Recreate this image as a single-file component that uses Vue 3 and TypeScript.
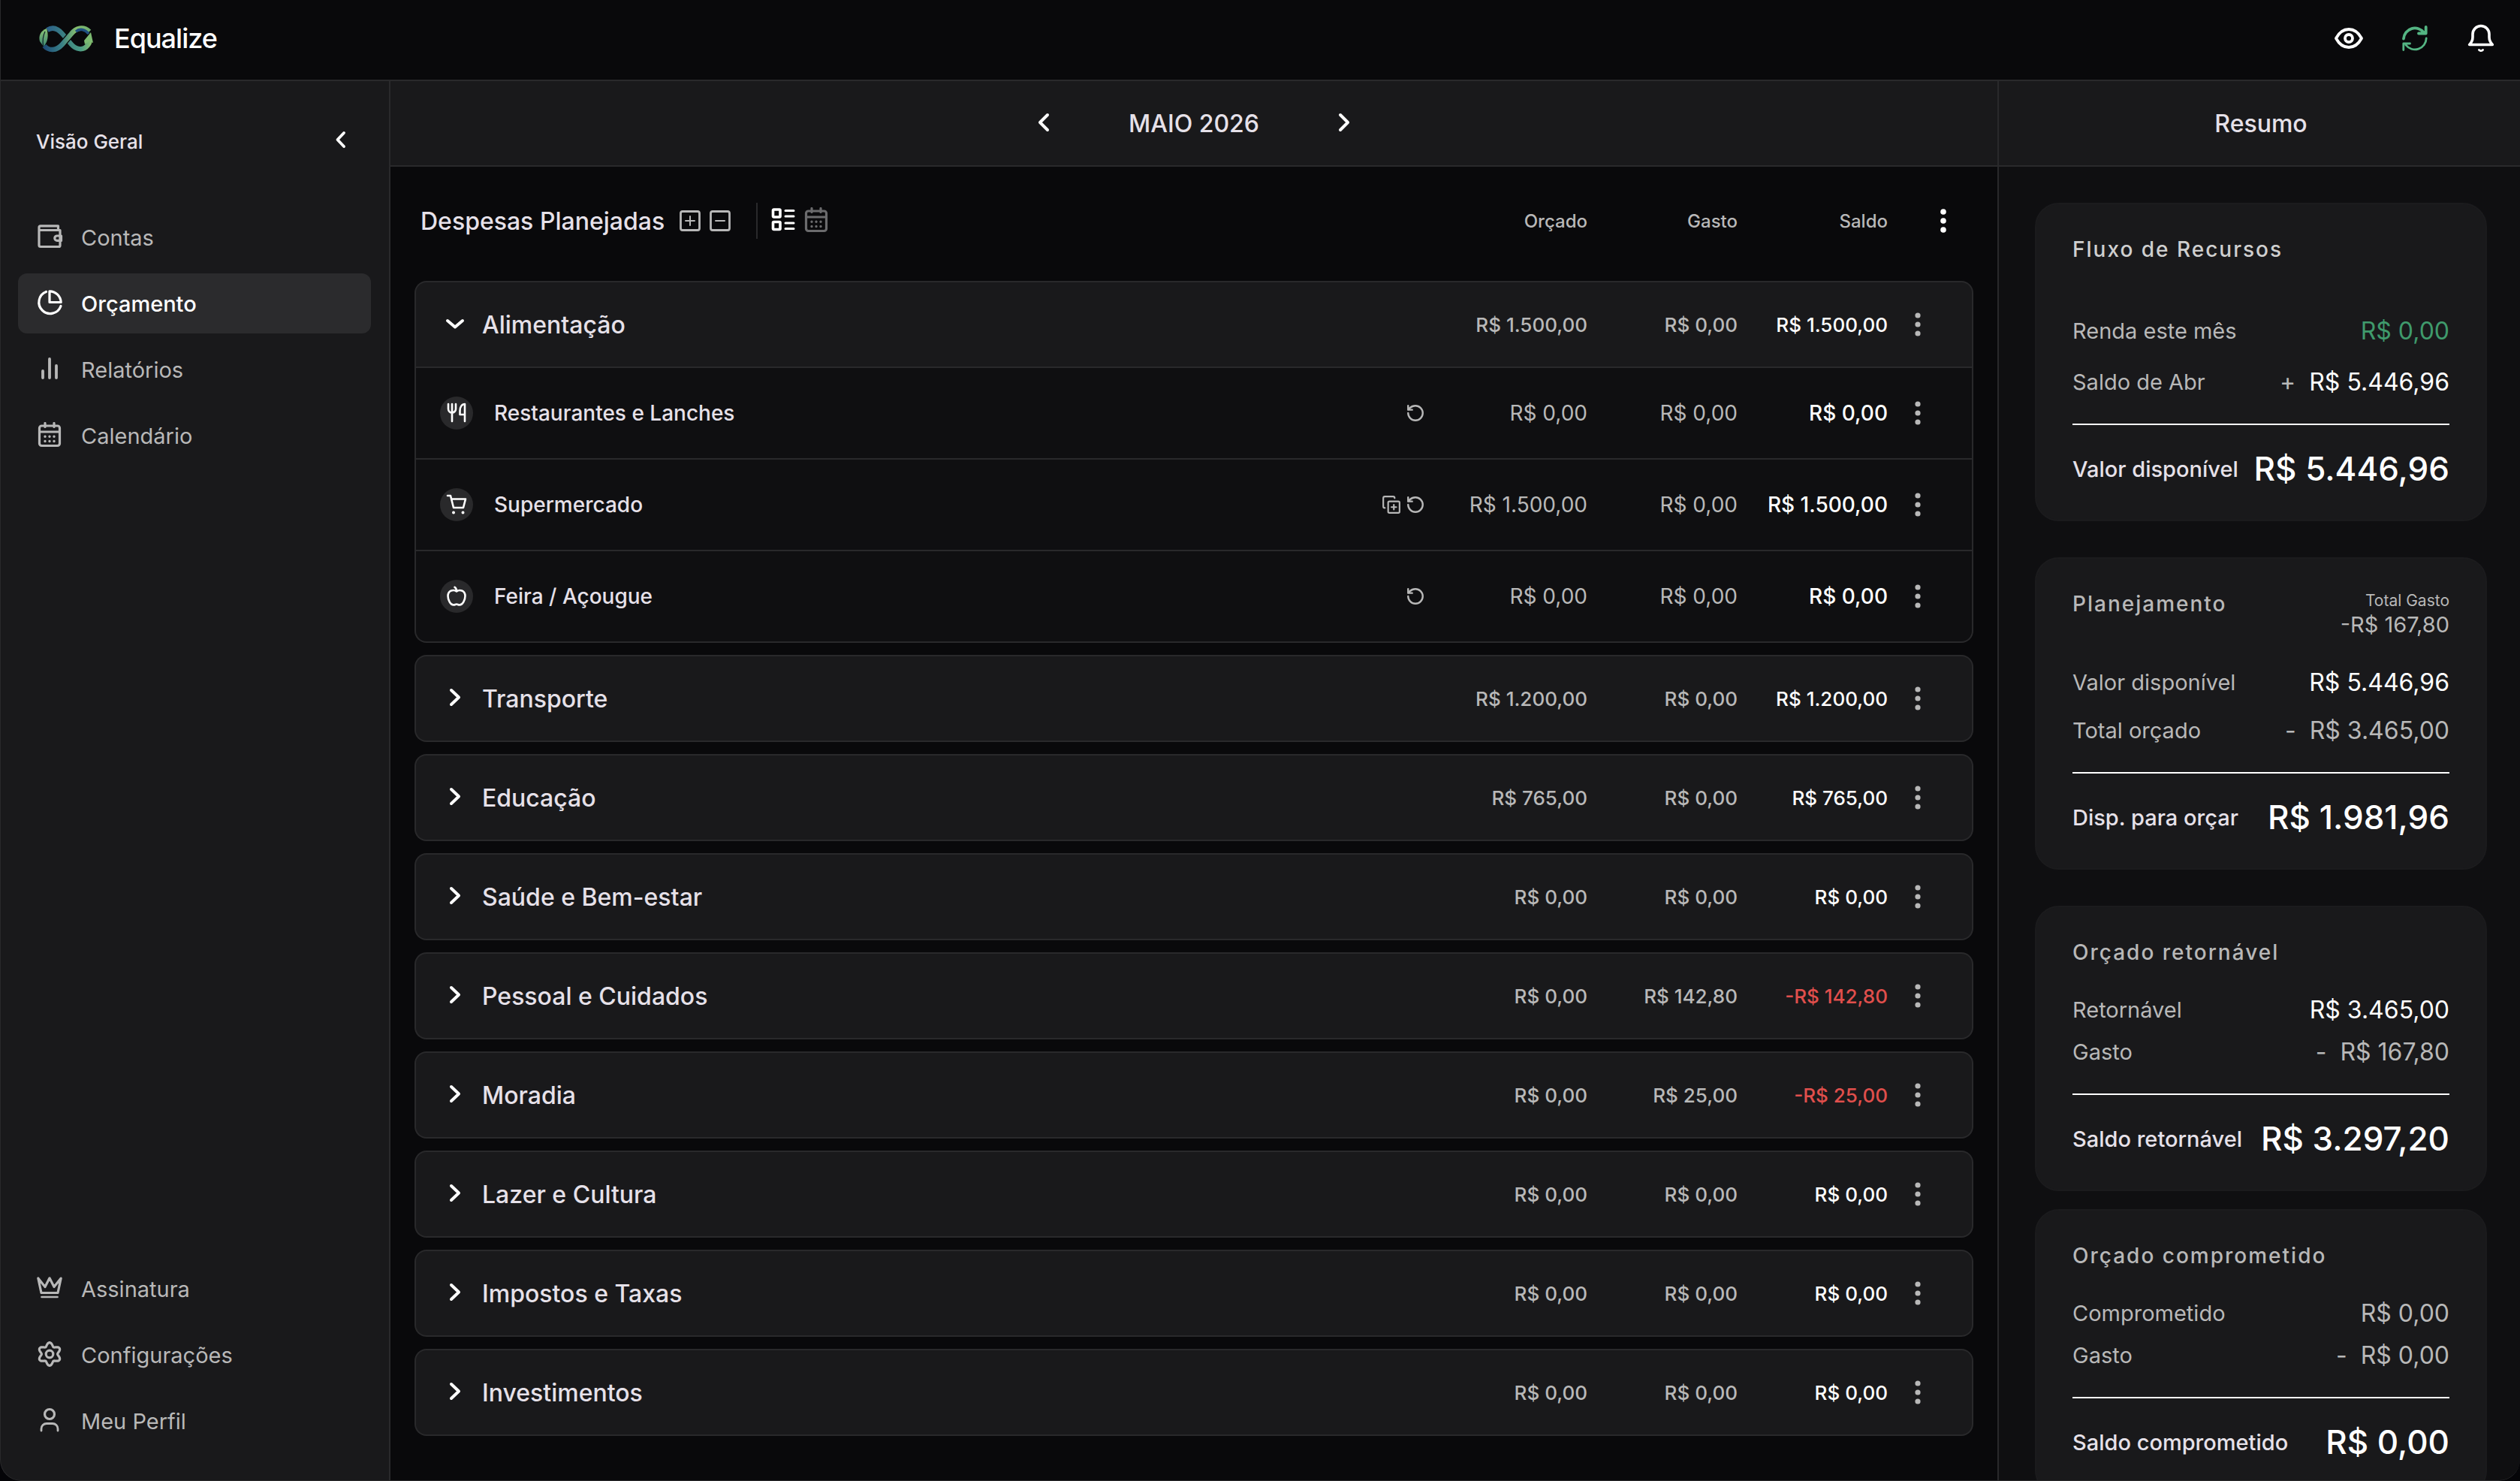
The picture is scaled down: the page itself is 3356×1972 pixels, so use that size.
<script setup lang="ts">
import { reactive, ref } from 'vue'

interface NavItem {
  label: string
  icon: string
  active?: boolean
}

interface Category {
  name: string
  icon: string
  budget: string
  spent: string
  balance: string
  copyable?: boolean
}

interface Group {
  name: string
  budget: string
  spent: string
  balance: string
  open: boolean
  items: Category[]
}

interface SummaryRow {
  label: string
  value: string
  sign?: string
  tone?: 'income' | 'strong'
}

interface SummaryCard {
  title: string
  density: 'loose' | 'medium' | 'tight'
  bright?: boolean
  aside?: { label: string; value: string }
  rows: SummaryRow[]
  totalLabel: string
  total: string
}

const mainNav: NavItem[] = [
  { label: 'Contas', icon: 'wallet' },
  { label: 'Orçamento', icon: 'pie', active: true },
  { label: 'Relatórios', icon: 'bars' },
  { label: 'Calendário', icon: 'calendar' },
]

const footerNav: NavItem[] = [
  { label: 'Assinatura', icon: 'crown' },
  { label: 'Configurações', icon: 'gear' },
  { label: 'Meu Perfil', icon: 'user' },
]

const zero = 'R$ 0,00'

const group = (name: string, budget = zero, spent = zero, balance = zero): Group => ({
  name,
  budget,
  spent,
  balance,
  open: false,
  items: [],
})

const groups = reactive<Group[]>([
  {
    name: 'Alimentação',
    budget: 'R$ 1.500,00',
    spent: zero,
    balance: 'R$ 1.500,00',
    open: true,
    items: [
      { name: 'Restaurantes e Lanches', icon: 'fork', budget: zero, spent: zero, balance: zero },
      { name: 'Supermercado', icon: 'cart', budget: 'R$ 1.500,00', spent: zero, balance: 'R$ 1.500,00', copyable: true },
      { name: 'Feira / Açougue', icon: 'apple', budget: zero, spent: zero, balance: zero },
    ],
  },
  group('Transporte', 'R$ 1.200,00', zero, 'R$ 1.200,00'),
  group('Educação', 'R$ 765,00', zero, 'R$ 765,00'),
  group('Saúde e Bem-estar'),
  group('Pessoal e Cuidados', zero, 'R$ 142,80', '-R$ 142,80'),
  group('Moradia', zero, 'R$ 25,00', '-R$ 25,00'),
  group('Lazer e Cultura'),
  group('Impostos e Taxas'),
  group('Investimentos'),
])

const cards: SummaryCard[] = [
  {
    title: 'Fluxo de Recursos',
    density: 'loose',
    bright: true,
    rows: [
      { label: 'Renda este mês', value: zero, tone: 'income' },
      { label: 'Saldo de Abr', value: 'R$ 5.446,96', sign: '+', tone: 'strong' },
    ],
    totalLabel: 'Valor disponível',
    total: 'R$ 5.446,96',
  },
  {
    title: 'Planejamento',
    density: 'medium',
    aside: { label: 'Total Gasto', value: '-R$ 167,80' },
    rows: [
      { label: 'Valor disponível', value: 'R$ 5.446,96', tone: 'strong' },
      { label: 'Total orçado', value: 'R$ 3.465,00', sign: '-' },
    ],
    totalLabel: 'Disp. para orçar',
    total: 'R$ 1.981,96',
  },
  {
    title: 'Orçado retornável',
    density: 'tight',
    rows: [
      { label: 'Retornável', value: 'R$ 3.465,00', tone: 'strong' },
      { label: 'Gasto', value: 'R$ 167,80', sign: '-' },
    ],
    totalLabel: 'Saldo retornável',
    total: 'R$ 3.297,20',
  },
  {
    title: 'Orçado comprometido',
    density: 'tight',
    rows: [
      { label: 'Comprometido', value: zero },
      { label: 'Gasto', value: zero, sign: '-' },
    ],
    totalLabel: 'Saldo comprometido',
    total: zero,
  },
]

const month = ref('MAIO 2026')

function setAll(open: boolean) {
  groups.forEach((g) => {
    g.open = open
  })
}

// Six-lobed outline of the settings icon, sampled around its centre.
const gearPath =
  'M' +
  Array.from({ length: 72 }, (_, i) => {
    const a = (i / 72) * Math.PI * 2
    const r = 13 + 2.4 * Math.cos(6 * (a + Math.PI / 2))
    return `${(18 + r * Math.cos(a)).toFixed(2)} ${(17 + r * Math.sin(a)).toFixed(2)}`
  }).join('L') +
  'Z'

const navIcons: Record<string, string> = {
  wallet:
    '<path d="M29.5 7.5V2.8H6a2 2 0 0 0-2 2V28.5a2 2 0 0 0 2 2H30.5a1.5 1.5 0 0 0 1.5-1.5V8.5H4.5"/><path d="M33.5 16H28a3.2 3.2 0 0 0 0 6.4h5.5z"/>',
  pie: '<path d="M13.5 2.5A15 15 0 1 0 33 21.5"/><path d="M18 1.8V16.5H33.2A15.2 15.2 0 0 0 18 1.8z"/>',
  bars: '<path d="M9 20v9M18 4v25M27 13v16" stroke-width="3.8"/>',
  calendar:
    '<rect x="4.5" y="5" width="27" height="26.5" rx="3"/><path d="M4.5 13H31.5M12 1.5V6.5M24 1.5V6.5"/><path d="M12 19.2h.01M18 19.2h.01M24 19.2h.01M12 25.5h.01M18 25.5h.01M24 25.5h.01" stroke-width="3.4"/>',
  crown:
    '<path d="M2.8 4L7 23.5H29L33.2 4L24 15.5L18 3.8L12 15.5Z"/><path d="M7.5 29H28.5" stroke-width="2.6"/>',
  gear: `<path d="${gearPath}"/><circle cx="18" cy="17" r="4.8"/>`,
  user: '<circle cx="18" cy="9" r="6.5"/><path d="M7 31V28.5a7 7 0 0 1 7-7H22a7 7 0 0 1 7 7V31" stroke-width="2.8"/>',
}

const categoryIcons: Record<string, string> = {
  fork: '<path d="M3 2v6.5a5 5 0 0 0 10 0V2M8 2V25M25 25V2c-4 0-6.5 4-6.5 9v5H25"/>',
  cart: '<path d="M2 2h4l4 16h13l3-11.5H7.5"/><path d="M10 24.5h.01M22.5 24.5h.01" stroke-width="4"/>',
  apple:
    '<path d="M14 7.5C10 4.5 2.8 6 2.5 13.5C2.5 19 6 25.5 10 25.5C12 25.5 12.5 24.5 14 24.5S16 25.5 18 25.5C22 25.5 25.5 19 25.5 13.5C25.2 6 18 4.5 14 7.5zM14 7C14 4.5 13 2.6 11.5 1.8"/>',
}
</script>

<template>
  <div class="shell">
    <header class="topbar">
      <a class="brand" href="#">
        <svg width="90" height="50" viewBox="0 0 90 50" fill="none" aria-hidden="true">
          <defs>
            <linearGradient id="back" x1="18" y1="0" x2="78" y2="0" gradientUnits="userSpaceOnUse">
              <stop offset="0" stop-color="#2b5f8a" />
              <stop offset=".45" stop-color="#3d8580" />
              <stop offset=".75" stop-color="#4a9a86" />
              <stop offset="1" stop-color="#85bd6c" />
            </linearGradient>
            <linearGradient id="front" x1="14" y1="0" x2="76" y2="0" gradientUnits="userSpaceOnUse">
              <stop offset="0" stop-color="#1d4a78" />
              <stop offset=".4" stop-color="#3a8286" />
              <stop offset=".7" stop-color="#86bd6e" />
              <stop offset="1" stop-color="#6fb070" />
            </linearGradient>
            <linearGradient id="leaf" x1="0" y1="12" x2="0" y2="36" gradientUnits="userSpaceOnUse">
              <stop offset="0" stop-color="#8cc474" />
              <stop offset="1" stop-color="#3b8672" />
            </linearGradient>
          </defs>
          <path d="M19 14C26 9.5 33 12 39 19L51 33C57 40 67 42 73 34C75 32 75.5 30 75.5 27" stroke="url(#back)" stroke-width="6.5" />
          <path d="M16 34C21 41 31 42 39 33L51 19C57 11 67 8.5 74 15" stroke="#09090b" stroke-width="9" />
          <path d="M15 35C21 42 31 42 39 33L51 19C57 11 67 8.5 75 16" stroke="url(#front)" stroke-width="6.5" />
          <path d="M57 16C62 11.5 69 13 74 19" stroke="#1f4f80" stroke-width="3.5" />
          <path d="M77 17L80 31L75 29L69 33L68 28Z" fill="#7dbb72" />
          <path d="M18 12C10 15 7 22 9 29L14 36C20 30 21 20 18 12Z" fill="url(#leaf)" />
          <path d="M16 16C13 22 12.5 28 13.5 36" stroke="#10202a" stroke-width="1.2" />
        </svg>
        <span>Equalize</span>
      </a>
      <div class="top-actions">
        <button type="button" aria-label="Ocultar valores">
          <svg width="40" height="40" viewBox="0 0 40 40" class="line" stroke-width="3.8">
            <path d="M3 20C7 12.5 13 8 20 8s13 4.5 17 12c-4 7.5-10 12-17 12S7 27.5 3 20z" />
            <circle cx="20" cy="20" r="5" />
          </svg>
        </button>
        <button type="button" class="sync" aria-label="Sincronizar">
          <svg width="40" height="40" viewBox="0 0 40 40" class="line">
            <path d="M5 20.5A15 15 0 0 1 32 12.5M34.7 5V13.5H25" stroke-width="3.8" />
            <path d="M35.2 20A15.2 15.2 0 0 1 8 29M4.8 35.5V27H13.5" stroke-width="2.8" />
          </svg>
        </button>
        <button type="button" aria-label="Notificações">
          <svg width="40" height="40" viewBox="0 0 40 40" class="line" stroke-width="3.6">
            <path d="M4.7 28.5H35.3C32 25 31 22 31 18.5V14.5A11 11 0 0 0 9 14.5V18.5C9 22 8 25 4.7 28.5z" />
            <path d="M17.5 35.5C18.5 37 21.5 37 22.5 35.5" stroke-width="2.8" />
          </svg>
        </button>
      </div>
    </header>

    <div class="body">
      <aside class="sidebar">
        <div class="sidebar-head">
          <h2>Visão Geral</h2>
          <button type="button" aria-label="Recolher menu">
            <svg width="32" height="32" viewBox="0 0 32 32" class="line" stroke-width="3.8">
              <path d="M20 5L11.5 14L20 23" />
            </svg>
          </button>
        </div>
        <nav>
          <a v-for="item in mainNav" :key="item.label" href="#" class="nav-link" :class="{ active: item.active }">
            <svg width="36" height="36" viewBox="0 0 36 36" class="line" stroke-width="3.2" v-html="navIcons[item.icon]" />
            <span>{{ item.label }}</span>
          </a>
        </nav>
        <nav class="nav-footer">
          <a v-for="item in footerNav" :key="item.label" href="#" class="nav-link">
            <svg width="36" height="36" viewBox="0 0 36 36" class="line" stroke-width="3.2" v-html="navIcons[item.icon]" />
            <span>{{ item.label }}</span>
          </a>
        </nav>
      </aside>

      <main class="main">
        <div class="bar">
          <div class="month">
            <button type="button" aria-label="Mês anterior">
              <svg width="32" height="32" viewBox="0 0 32 32" class="line" stroke-width="4">
                <path d="M21 5L11 15L21 25" />
              </svg>
            </button>
            <h1>{{ month }}</h1>
            <button type="button" aria-label="Próximo mês">
              <svg width="32" height="32" viewBox="0 0 32 32" class="line" stroke-width="4">
                <path d="M11 5L21 15L11 25" />
              </svg>
            </button>
          </div>
        </div>

        <div class="content">
          <table>
            <colgroup>
              <col />
              <col class="col-value" />
              <col class="col-value" />
              <col class="col-value" />
              <col class="col-menu" />
            </colgroup>
            <thead>
              <tr>
                <th scope="col" class="title-cell">
                  <div class="title">
                    <h2>Despesas Planejadas</h2>
                    <div class="toggles">
                      <button type="button" aria-label="Expandir tudo" @click="setAll(true)">
                        <svg width="32" height="32" viewBox="0 0 32 32" class="line" stroke-width="2.8">
                          <rect x="3.5" y="3.5" width="25" height="25" rx="2.5" />
                          <path d="M16 10V22M10 16H22" stroke-width="2" />
                        </svg>
                      </button>
                      <button type="button" aria-label="Recolher tudo" @click="setAll(false)">
                        <svg width="32" height="32" viewBox="0 0 32 32" class="line" stroke-width="2.8">
                          <rect x="3.5" y="3.5" width="25" height="25" rx="2.5" />
                          <path d="M10 16H22" stroke-width="2" />
                        </svg>
                      </button>
                    </div>
                    <div class="views">
                      <button type="button" class="on" aria-label="Ver em lista">
                        <svg width="36" height="36" viewBox="0 0 36 36" class="line" stroke-width="3.6">
                          <rect x="4.5" y="3" width="9.5" height="10" rx="1" />
                          <rect x="4.5" y="19.5" width="9.5" height="10" rx="1" />
                          <path d="M21 4.5H32M21 12H32M21 21H32M21 28.5H32" stroke-width="3" />
                        </svg>
                      </button>
                      <button type="button" aria-label="Ver em calendário">
                        <svg width="36" height="36" viewBox="0 0 36 36" class="line" stroke-width="3.2" v-html="navIcons.calendar" />
                      </button>
                    </div>
                  </div>
                </th>
                <th scope="col">Orçado</th>
                <th scope="col">Gasto</th>
                <th scope="col">Saldo</th>
                <th scope="col" class="menu-cell">
                  <button type="button" class="kebab" aria-label="Mais opções">
                    <svg width="8" height="32" viewBox="0 0 8 32" fill="currentColor">
                      <circle cx="4" cy="4" r="3.8" /><circle cx="4" cy="16" r="3.8" /><circle cx="4" cy="28" r="3.8" />
                    </svg>
                  </button>
                </th>
              </tr>
            </thead>
            <tbody v-for="g in groups" :key="g.name">
              <tr class="group">
                <th scope="row">
                  <button type="button" class="group-toggle" :aria-expanded="g.open" @click="g.open = !g.open">
                    <svg width="32" height="32" viewBox="0 0 32 32" class="line" stroke-width="4">
                      <path :d="g.open ? 'M6 11L16 19.5L26 11' : 'M11 5L21 14.5L11 24'" />
                    </svg>
                    <span>{{ g.name }}</span>
                  </button>
                </th>
                <td>{{ g.budget }}</td>
                <td>{{ g.spent }}</td>
                <td class="balance" :class="{ negative: g.balance.startsWith('-') }">{{ g.balance }}</td>
                <td class="menu-cell">
                  <button type="button" class="kebab" :aria-label="`Opções de ${g.name}`">
                    <svg width="8" height="32" viewBox="0 0 8 32" fill="currentColor">
                      <circle cx="4" cy="4" r="3.6" /><circle cx="4" cy="16" r="3.6" /><circle cx="4" cy="28" r="3.6" />
                    </svg>
                  </button>
                </td>
              </tr>
              <template v-if="g.open">
                <tr v-for="c in g.items" :key="c.name" class="category">
                  <th scope="row">
                    <div class="category-name">
                      <span class="badge">
                        <svg width="28" height="28" viewBox="0 0 28 28" class="line" stroke-width="2.6" v-html="categoryIcons[c.icon]" />
                      </span>
                      <span>{{ c.name }}</span>
                      <span class="row-actions">
                        <button v-if="c.copyable" type="button" aria-label="Copiar valor">
                          <svg width="26" height="26" viewBox="0 0 24 24" class="line" stroke-width="2">
                            <rect x="8" y="8" width="14" height="14" rx="1.5" />
                            <path d="M15 12v6M12 15h6M4 16a2 2 0 0 1-2-2V4a2 2 0 0 1 2-2h10a2 2 0 0 1 2 2" />
                          </svg>
                        </button>
                        <button type="button" aria-label="Restaurar valor">
                          <svg width="26" height="26" viewBox="0 0 24 24" class="line" stroke-width="2.2">
                            <path d="M3 12a9 9 0 1 0 9-9 9.75 9.75 0 0 0-6.74 2.74L3 8M3 3v5h5" />
                          </svg>
                        </button>
                      </span>
                    </div>
                  </th>
                  <td>{{ c.budget }}</td>
                  <td>{{ c.spent }}</td>
                  <td class="balance">{{ c.balance }}</td>
                  <td class="menu-cell">
                    <button type="button" class="kebab" :aria-label="`Opções de ${c.name}`">
                      <svg width="8" height="32" viewBox="0 0 8 32" fill="currentColor">
                        <circle cx="4" cy="4" r="3.6" /><circle cx="4" cy="16" r="3.6" /><circle cx="4" cy="28" r="3.6" />
                      </svg>
                    </button>
                  </td>
                </tr>
              </template>
            </tbody>
          </table>
        </div>
      </main>

      <aside class="summary">
        <div class="bar"><h2>Resumo</h2></div>
        <div class="cards">
          <section v-for="card in cards" :key="card.title" class="card" :class="card.density">
            <div class="card-head">
              <h3 :class="{ bright: card.bright }">{{ card.title }}</h3>
              <p v-if="card.aside">
                <small>{{ card.aside.label }}</small>
                <span>{{ card.aside.value }}</span>
              </p>
            </div>
            <dl>
              <div v-for="row in card.rows" :key="row.label" class="row">
                <dt>{{ row.label }}</dt>
                <dd :class="row.tone"><span v-if="row.sign" class="sign">{{ row.sign }}</span>{{ row.value }}</dd>
              </div>
              <div class="total">
                <dt>{{ card.totalLabel }}</dt>
                <dd>{{ card.total }}</dd>
              </div>
            </dl>
          </section>
        </div>
      </aside>
    </div>
  </div>
</template>

<style>
body {
  background: #050508;
}
</style>

<style scoped>
.shell {
  --page: #09090b;
  --surface: #19191b;
  --sunken: #0f0f11;
  --line: #29292b;
  --text: #e6e1e9;
  --muted: #b8b8b8;
  position: relative;
  display: flex;
  flex-direction: column;
  height: 100vh;
  overflow: hidden;
  border-radius: 0 0 28px 28px;
  background: var(--page);
  color: var(--text);
  font-family: Inter, 'Liberation Sans', sans-serif;
  font-size: 28px;
}

.shell::after {
  content: '';
  position: absolute;
  inset: 0;
  border: 1px solid var(--line);
  border-top: 0;
  border-right: 0;
  border-radius: 0 0 28px 28px;
  pointer-events: none;
}

h1,
h2,
h3,
p,
dl,
dd {
  margin: 0;
}

h1,
h2,
h3 {
  font-weight: 500;
}

button {
  display: flex;
  align-items: center;
  justify-content: center;
  padding: 0;
  border: 0;
  background: none;
  color: inherit;
  font: inherit;
  cursor: pointer;
}

a {
  color: inherit;
  text-decoration: none;
}

svg {
  display: block;
  flex: none;
}

.line {
  fill: none;
  stroke: currentColor;
  stroke-linecap: round;
  stroke-linejoin: round;
}

.topbar {
  flex: none;
  display: flex;
  align-items: center;
  justify-content: space-between;
  box-sizing: border-box;
  height: 108px;
  padding: 0 32px 4px 44px;
  border-bottom: 2px solid var(--line);
}

.brand {
  display: flex;
  align-items: center;
  gap: 18px;
  color: #fff;
  font-size: 36px;
  font-weight: 500;
  letter-spacing: -1px;
}

.top-actions {
  display: flex;
  gap: 48px;
  color: #fff;
}

.sync {
  color: #54b583;
}

.body {
  flex: 1;
  display: flex;
  min-height: 0;
}

.sidebar {
  flex: none;
  display: flex;
  flex-direction: column;
  box-sizing: border-box;
  width: 520px;
  padding: 0 24px 40px;
  border-right: 2px solid var(--line);
  background: var(--surface);
}

.sidebar-head {
  display: flex;
  align-items: center;
  justify-content: space-between;
  height: 160px;
  margin-bottom: 8px;
  padding: 0 24px;
}

.sidebar-head h2 {
  font-size: 26px;
}

.sidebar-head button {
  color: #fff;
}

nav {
  display: flex;
  flex-direction: column;
  gap: 8px;
}

.nav-footer {
  margin-top: auto;
}

.nav-link {
  display: flex;
  align-items: center;
  gap: 24px;
  height: 80px;
  padding: 0 24px;
  border-radius: 12px;
  color: var(--muted);
  font-size: 29px;
}

.nav-link.active {
  background: #2b2b2d;
  color: #fff;
  font-weight: 500;
}

.main {
  flex: 1;
  min-width: 0;
}

.bar {
  display: flex;
  align-items: center;
  justify-content: center;
  box-sizing: border-box;
  height: 114px;
  border-bottom: 2px solid var(--line);
  background: var(--surface);
}

.month {
  display: flex;
  align-items: center;
  justify-content: space-between;
  width: 432px;
}

.month button {
  color: #fff;
}

h1,
.bar h2 {
  font-size: 32px;
}

.content {
  padding: 0 32px;
}

table {
  width: 100%;
  border-spacing: 0;
  table-layout: fixed;
}

.col-value {
  width: 200px;
}

.col-menu {
  width: 114px;
}

th,
td {
  box-sizing: border-box;
  padding: 0;
  text-align: right;
  font-weight: 500;
}

thead th {
  height: 152px;
  padding-bottom: 8px;
  color: var(--muted);
  font-size: 24px;
}

.title-cell {
  padding-left: 8px;
}

.title {
  display: flex;
  align-items: center;
  color: var(--text);
}

.title h2 {
  font-size: 32px;
}

.toggles {
  display: flex;
  gap: 8px;
  margin-left: 18px;
  color: var(--muted);
}

.views {
  display: flex;
  align-items: center;
  gap: 8px;
  height: 48px;
  margin-left: 32px;
  padding-left: 16px;
  border-left: 2px solid var(--line);
  color: #6b6b6d;
}

.views .on {
  color: #fff;
}

tbody + tbody::before {
  content: '';
  display: table-row;
  height: 16px;
}

.kebab {
  width: 40px;
  height: 40px;
}

.menu-cell .kebab {
  margin-left: 20px;
}

thead .menu-cell .kebab {
  margin-left: 54px;
  color: #fff;
}

.group > * {
  height: 116px;
  border-top: 2px solid var(--line);
  border-bottom: 2px solid var(--line);
  background: var(--surface);
}

.category > * {
  height: 122px;
  border-bottom: 2px solid var(--line);
  background: var(--sunken);
}

tbody td {
  color: var(--muted);
}

.group td {
  font-size: 26px;
}

.category td {
  font-weight: 400;
}

tbody .balance,
.category .balance {
  color: #fff;
  font-weight: 500;
}

tbody .negative {
  color: #e04f4c;
}

tbody tr > :first-child {
  border-left: 2px solid var(--line);
}

tbody tr > :last-child {
  border-right: 2px solid var(--line);
}

tbody tr:first-child > :first-child {
  border-top-left-radius: 16px;
}

tbody tr:first-child > :last-child {
  border-top-right-radius: 16px;
}

tbody tr:last-child > :first-child {
  border-bottom-left-radius: 16px;
}

tbody tr:last-child > :last-child {
  border-bottom-right-radius: 16px;
}

.group-toggle {
  gap: 20px;
  padding-left: 36px;
  color: var(--text);
  font-size: 32px;
}

.group-toggle svg {
  color: #fff;
}

.category-name {
  display: flex;
  align-items: center;
  padding: 0 16px 0 32px;
}

.badge {
  display: flex;
  align-items: center;
  justify-content: center;
  width: 44px;
  height: 44px;
  margin-right: 28px;
  border-radius: 50%;
  background: #29292b;
  color: #fff;
}

.row-actions {
  display: flex;
  gap: 6px;
  margin-left: auto;
  color: var(--muted);
}

.summary {
  flex: none;
  box-sizing: border-box;
  width: 696px;
  border-left: 2px solid var(--line);
  background: var(--sunken);
}

.summary .bar {
  padding-left: 4px;
}

.cards {
  padding: 48px 44px 0 48px;
}

.card {
  margin-bottom: 48px;
  padding: 40px 48px;
  border: 2px solid #1b1b1d;
  border-radius: 32px;
  background: var(--surface);
  font-size: 29px;
}

.card.tight {
  margin-bottom: 24px;
}

.card-head {
  display: flex;
  justify-content: space-between;
  margin-bottom: 28px;
  line-height: 40px;
}

.loose .card-head {
  margin-bottom: 54px;
}

h3 {
  color: var(--muted);
  font-size: 28px;
  letter-spacing: 2px;
}

h3.bright {
  color: #cfcfcf;
}

.card-head p {
  display: flex;
  flex-direction: column;
  color: var(--muted);
  line-height: 32px;
  text-align: right;
}

.card-head small {
  font-size: 21px;
}

.row,
.total {
  display: flex;
  align-items: center;
  justify-content: space-between;
}

.row {
  height: 56px;
  color: var(--muted);
}

.loose .row {
  height: 68px;
}

.medium .row {
  height: 64px;
}

.row dd {
  font-size: 32px;
}

.row .income {
  color: #3f9a6c;
}

.row .strong {
  color: #fff;
}

.sign {
  margin-right: 18px;
  color: var(--muted);
}

.total {
  height: 56px;
  margin-top: 28px;
  padding-top: 30px;
  border-top: 2px solid #fff;
  font-weight: 500;
}

.loose .total {
  margin-top: 22px;
}

.medium .total {
  margin-top: 24px;
}

.total dd {
  color: #fff;
  font-size: 44px;
}
</style>
